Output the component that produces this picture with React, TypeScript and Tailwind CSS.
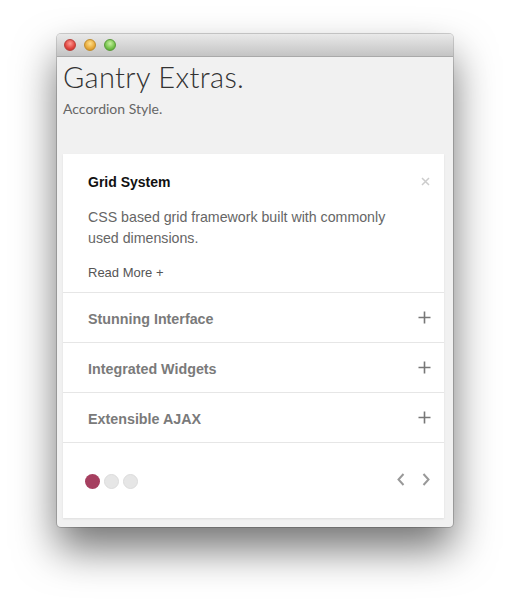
import React from "react";

const Plus = () => (
  <svg width="13" height="13" viewBox="0 0 13 13" className="block">
    <path d="M6.5 0.5v12M0.5 6.5h12" stroke="#777" strokeWidth="1.6" fill="none" />
  </svg>
);

const Row = ({ title }: { title: string }) => (
  <div className="h-[50px] border-t border-[#e6e6e6] flex items-center justify-between pl-[25px] pr-[13px]">
    <span className="mt-[5px] text-[14.3px] font-bold text-[#7a7a7a]" style={{ fontFamily: "'Liberation Sans', Arial, sans-serif" }}>
      {title}
    </span>
    <Plus />
  </div>
);

export default function App() {
  return (
    <div className="w-[509px] h-[606px] bg-white pt-[34px] pl-[57px] overflow-hidden">
      <div className="w-[396px] h-[493px] rounded-[4px] bg-[#f1f1f1] shadow-[0_22px_42px_rgba(0,0,0,0.55),0_0_0_1px_rgba(0,0,0,0.18)] flex flex-col overflow-hidden">
        <div className="h-[23px] shrink-0 bg-gradient-to-b from-[#e9e9e9] to-[#c4c4c4] border-b border-[#a9a9a9] flex items-center gap-[8px] pl-[7px]">
          <span className="w-[12px] h-[12px] rounded-full bg-[radial-gradient(circle_at_50%_35%,#ff9a92,#e0443e_60%,#b52a25)] border border-[#b9403a]" />
          <span className="w-[12px] h-[12px] rounded-full bg-[radial-gradient(circle_at_50%_35%,#ffe08a,#e7a93a_60%,#c0831d)] border border-[#c08d2d]" />
          <span className="w-[12px] h-[12px] rounded-full bg-[radial-gradient(circle_at_50%_35%,#c7f0a0,#74c24a_60%,#4a9a2a)] border border-[#5a9a3a]" />
        </div>
        <div className="flex-1 flex flex-col pl-[6px] pr-[9px]">
          <div
            className="text-[29px] leading-[34px] text-[#333] pt-[3px] tracking-[0.35px]"
            style={{ fontFamily: "Lato, 'Open Sans', sans-serif", fontWeight: 300 }}
          >
            Gantry Extras.
          </div>
          <div
            className="text-[14px] leading-[18px] text-[#666] mt-[6px]"
            style={{ fontFamily: "Lato, 'Open Sans', sans-serif" }}
          >
            Accordion Style.
          </div>
          <div className="mt-[36px] bg-white h-[364px] shadow-[0_1px_2px_rgba(0,0,0,0.08)] flex flex-col" style={{ fontFamily: "'Liberation Sans', Arial, sans-serif" }}>
            <div className="pl-[25px] pr-[14px] pt-[19px] pb-[10px]">
              <div className="flex items-center justify-between">
                <span className="text-[14px] leading-[18px] font-bold text-[#111]">Grid System</span>
                <svg width="9" height="9" viewBox="0 0 9 9" className="block -mt-[2px]">
                  <path d="M1 1l7 7M8 1l-7 7" stroke="#ccc" strokeWidth="1.5" fill="none" />
                </svg>
              </div>
              <p className="mt-[16px] text-[14.2px] leading-[21px] text-[#666] pr-[16px]">
                CSS based grid framework built with commonly used dimensions.
              </p>
              <div className="mt-[15px] text-[13px] leading-[18px] text-[#555]">Read More +</div>
            </div>
            <Row title="Stunning Interface" />
            <Row title="Integrated Widgets" />
            <Row title="Extensible AJAX" />
            <div className="flex-1 border-t border-[#e6e6e6] flex items-center justify-between pl-[22px] pr-[14px]">
              <div className="flex gap-[4px] mt-[2px]">
                <span className="w-[15px] h-[15px] rounded-full bg-[#a63f60]" />
                <span className="w-[15px] h-[15px] rounded-full bg-[#e6e6e6] border border-[#dcdcdc]" />
                <span className="w-[15px] h-[15px] rounded-full bg-[#e6e6e6] border border-[#dcdcdc]" />
              </div>
              <div className="flex items-center gap-[17px] pb-[3px]">
                <svg width="8" height="13" viewBox="0 0 8 13" className="block">
                  <path d="M6.5 1L1.5 6.5l5 5.5" stroke="#999" strokeWidth="2" fill="none" />
                </svg>
                <svg width="8" height="13" viewBox="0 0 8 13" className="block">
                  <path d="M1.5 1l5 5.5-5 5.5" stroke="#999" strokeWidth="2" fill="none" />
                </svg>
              </div>
            </div>
          </div>
        </div>
      </div>
    </div>
  );
}
